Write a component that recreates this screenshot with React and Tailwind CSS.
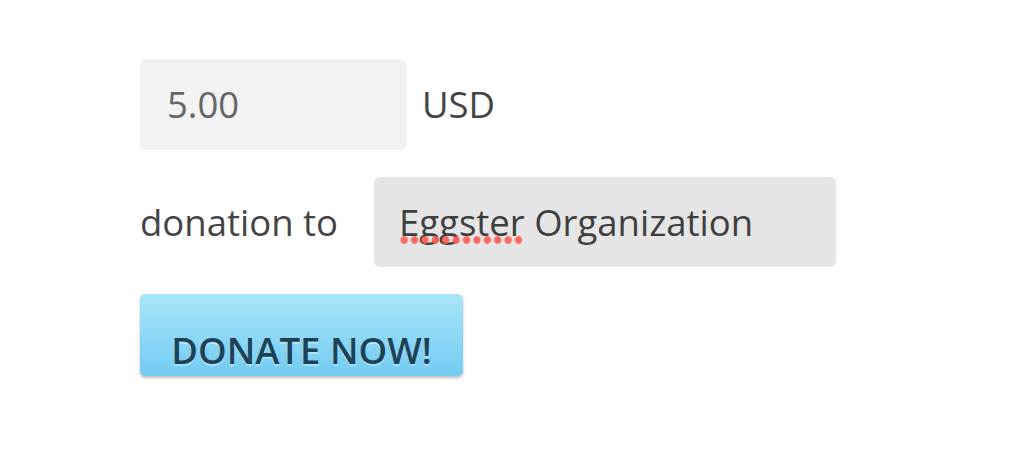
export default function App() {
  return (
    <div className="w-[1022px] h-[467px] bg-white font-['Open_Sans',sans-serif] text-[#444] pl-[140px] pt-[59px]">
      <div className="flex flex-col items-start gap-[27px]">
        <div className="flex items-center gap-[15px]">
          <div className="w-[267px] h-[91px] rounded-[6px] bg-[#f2f2f2] flex items-center pl-[27px] text-[36.5px] text-[#666]">5.00</div>
          <span className="text-[36.5px]">USD</span>
        </div>
        <div className="flex items-center gap-[36px]">
          <span className="text-[36.5px]">donation to</span>
          <div className="w-[462px] h-[90px] rounded-[6px] bg-[#e5e5e5] flex items-center pl-[25px] text-[36.5px] text-[#3f3f3f]">
            <span className="relative">
              Eggster
              <span className="absolute left-0 w-[124px] top-[41px] h-[8px] bg-[radial-gradient(circle,rgba(255,95,85,0.92)_3.5px,transparent_4px)] bg-[length:10.4px_8px] bg-repeat-x"></span>
            </span>
            <span>&nbsp;Organization</span>
          </div>
        </div>
        <button className="w-[323px] h-[82px] rounded-[5px] bg-gradient-to-b from-[#a9e5f8] to-[#72cbf2] shadow-[0_2px_3px_rgba(0,0,0,0.25)] flex items-center justify-center pt-[30px] text-[36.5px] font-semibold text-[#1d4358] [text-shadow:0_2px_0_rgba(255,255,255,0.4)]">
          DONATE NOW!
        </button>
      </div>
    </div>
  );
}
